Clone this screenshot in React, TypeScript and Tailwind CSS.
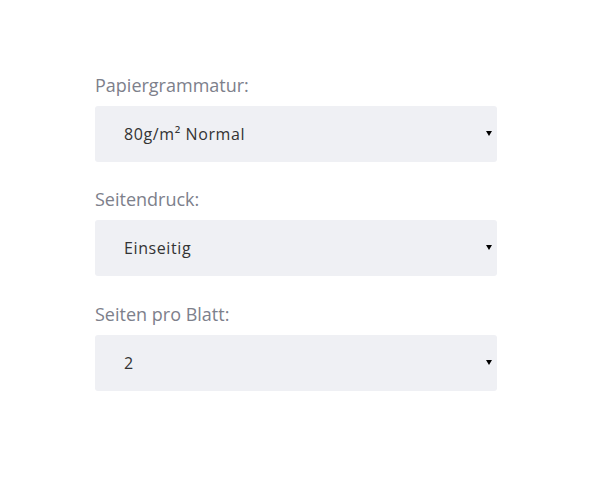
import React from "react";

const fields = [
  { label: "Papiergrammatur:", value: <>80g/m² Normal</> },
  { label: "Seitendruck:", value: <>Einseitig</> },
  { label: "Seiten pro Blatt:", value: <>2</> },
];

export default function App() {
  return (
    <div className="w-[599px] h-[480px] bg-white pt-[74px] pl-[95px]" style={{ fontFamily: "'Open Sans', Lato, sans-serif" }}>
      <div className="w-[402px] flex flex-col">
        {fields.map((f, i) => (
          <div key={i} className={"flex flex-col gap-[8px] " + (i === 1 ? "mt-[26px]" : i === 2 ? "mt-[27px]" : "")}>
            <div className="h-[24px] leading-[22px] text-[18px] text-[#7d808b]">{f.label}</div>
            <div className="h-[56px] bg-[#eff0f4] rounded-[3px] flex items-center pl-[29px] pr-[5px] text-[16px] tracking-[0.6px] text-[#333]">
              <span className="flex-1 -mt-[1px]">{f.value}</span>
              <svg width="6" height="5" viewBox="0 0 6 5" className="mb-[1px]">
                <polygon points="0,0 6,0 3,5" fill="#000" />
              </svg>
            </div>
          </div>
        ))}
      </div>
    </div>
  );
}
